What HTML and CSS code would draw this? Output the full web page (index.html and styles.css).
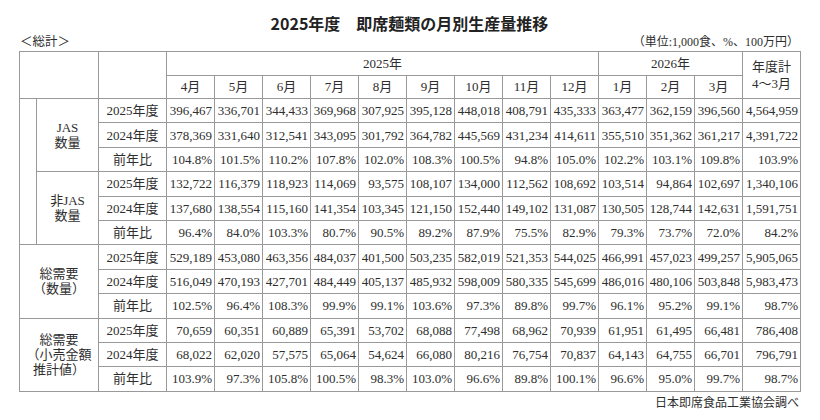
FILE: index.html
```html
<!DOCTYPE html>
<html lang="ja">
<head>
<meta charset="utf-8">
<link rel="stylesheet" href="styles.css">
</head>
<body>
<div class="page">
  <h1 class="title">2025年度　即席麺類の月別生産量推移</h1>
  <div class="meta">
    <span class="sum">＜総計＞</span>
    <span>（単位:1,000食、%、100万円）</span>
  </div>
  <table class="grid">
    <colgroup>
      <col class="c-a"><col class="c-b"><col class="c-lab">
      <col class="c-m"><col class="c-m"><col class="c-m"><col class="c-m"><col class="c-m"><col class="c-m">
      <col class="c-m"><col class="c-m"><col class="c-m"><col class="c-m"><col class="c-m"><col class="c-m">
      <col class="c-t">
    </colgroup>
    <thead>
      <tr class="hr">
        <th colspan="2" rowspan="2"></th>
        <th rowspan="2"></th>
        <th colspan="9">2025年</th>
        <th colspan="3">2026年</th>
        <th rowspan="2" class="tot">年度計<br>4～3月</th>
      </tr>
      <tr class="hr">
        <th>4月</th><th>5月</th><th>6月</th><th>7月</th><th>8月</th><th>9月</th><th>10月</th><th>11月</th><th>12月</th>
        <th>1月</th><th>2月</th><th>3月</th>
      </tr>
    </thead>
    <tbody>
      <tr>
        <td rowspan="6"></td>
        <td rowspan="3" class="grp">JAS<br>数量</td>
        <td class="lab">2025年度</td>
        <td>396,467</td><td>336,701</td><td>344,433</td><td>369,968</td><td>307,925</td><td>395,128</td><td>448,018</td><td>408,791</td><td>435,333</td><td>363,477</td><td>362,159</td><td>396,560</td><td>4,564,959</td>
      </tr>
      <tr>
        <td class="lab">2024年度</td>
        <td>378,369</td><td>331,640</td><td>312,541</td><td>343,095</td><td>301,792</td><td>364,782</td><td>445,569</td><td>431,234</td><td>414,611</td><td>355,510</td><td>351,362</td><td>361,217</td><td>4,391,722</td>
      </tr>
      <tr>
        <td class="lab">前年比</td>
        <td>104.8%</td><td>101.5%</td><td>110.2%</td><td>107.8%</td><td>102.0%</td><td>108.3%</td><td>100.5%</td><td>94.8%</td><td>105.0%</td><td>102.2%</td><td>103.1%</td><td>109.8%</td><td>103.9%</td>
      </tr>
      <tr>
        <td rowspan="3" class="grp">非JAS<br>数量</td>
        <td class="lab">2025年度</td>
        <td>132,722</td><td>116,379</td><td>118,923</td><td>114,069</td><td>93,575</td><td>108,107</td><td>134,000</td><td>112,562</td><td>108,692</td><td>103,514</td><td>94,864</td><td>102,697</td><td>1,340,106</td>
      </tr>
      <tr>
        <td class="lab">2024年度</td>
        <td>137,680</td><td>138,554</td><td>115,160</td><td>141,354</td><td>103,345</td><td>121,150</td><td>152,440</td><td>149,102</td><td>131,087</td><td>130,505</td><td>128,744</td><td>142,631</td><td>1,591,751</td>
      </tr>
      <tr>
        <td class="lab">前年比</td>
        <td>96.4%</td><td>84.0%</td><td>103.3%</td><td>80.7%</td><td>90.5%</td><td>89.2%</td><td>87.9%</td><td>75.5%</td><td>82.9%</td><td>79.3%</td><td>73.7%</td><td>72.0%</td><td>84.2%</td>
      </tr>
      <tr>
        <td rowspan="3" colspan="2" class="grp">総需要<br>（数量）</td>
        <td class="lab">2025年度</td>
        <td>529,189</td><td>453,080</td><td>463,356</td><td>484,037</td><td>401,500</td><td>503,235</td><td>582,019</td><td>521,353</td><td>544,025</td><td>466,991</td><td>457,023</td><td>499,257</td><td>5,905,065</td>
      </tr>
      <tr>
        <td class="lab">2024年度</td>
        <td>516,049</td><td>470,193</td><td>427,701</td><td>484,449</td><td>405,137</td><td>485,932</td><td>598,009</td><td>580,335</td><td>545,699</td><td>486,016</td><td>480,106</td><td>503,848</td><td>5,983,473</td>
      </tr>
      <tr>
        <td class="lab">前年比</td>
        <td>102.5%</td><td>96.4%</td><td>108.3%</td><td>99.9%</td><td>99.1%</td><td>103.6%</td><td>97.3%</td><td>89.8%</td><td>99.7%</td><td>96.1%</td><td>95.2%</td><td>99.1%</td><td>98.7%</td>
      </tr>
      <tr>
        <td rowspan="3" colspan="2" class="grp">総需要<br>（小売金額<br>推計値）</td>
        <td class="lab">2025年度</td>
        <td>70,659</td><td>60,351</td><td>60,889</td><td>65,391</td><td>53,702</td><td>68,088</td><td>77,498</td><td>68,962</td><td>70,939</td><td>61,951</td><td>61,495</td><td>66,481</td><td>786,408</td>
      </tr>
      <tr>
        <td class="lab">2024年度</td>
        <td>68,022</td><td>62,020</td><td>57,575</td><td>65,064</td><td>54,624</td><td>66,080</td><td>80,216</td><td>76,754</td><td>70,837</td><td>64,143</td><td>64,755</td><td>66,701</td><td>796,791</td>
      </tr>
      <tr>
        <td class="lab">前年比</td>
        <td>103.9%</td><td>97.3%</td><td>105.8%</td><td>100.5%</td><td>98.3%</td><td>103.0%</td><td>96.6%</td><td>89.8%</td><td>100.1%</td><td>96.6%</td><td>95.0%</td><td>99.7%</td><td>98.7%</td>
      </tr>
    </tbody>
  </table>
  <div class="source">日本即席食品工業協会調べ</div>
</div>
</body>
</html>
```

FILE: styles.css
```css
html, body {
  margin: 0;
  padding: 0;
  background: #ffffff;
}

.page {
  width: 820px;
  height: 420px;
  padding: 0 20px 0 19px;
  box-sizing: border-box;
  color: #2e2e2e;
  font-family: "Liberation Serif", "Noto Sans CJK JP", serif;
}

.title {
  margin: 0;
  padding-top: 13px;
  height: 21px;
  line-height: 21px;
  text-align: center;
  font-family: "Noto Sans CJK JP", "Noto Sans", sans-serif;
  font-size: 16px;
  font-weight: 700;
  color: #222;
}

.meta {
  display: flex;
  justify-content: space-between;
  align-items: center;
  height: 17px;
  font-size: 12px;
  line-height: 17px;
  padding-right: 1px;
}

.meta .sum {
  font-size: 12.5px;
  margin-left: 1px;
}

.grid {
  width: 781px;
  border-collapse: collapse;
  table-layout: fixed;
  font-size: 13px;
  border: 1px solid #aaa;
}

.c-a { width: 17px; }
.c-b { width: 62px; }
.c-lab { width: 68px; }
.c-m { width: 48px; }
.c-t { width: 58px; }

.grid th,
.grid td {
  border: 1px solid #999;
  padding: 0 2px 0 0;
  white-space: nowrap;
  line-height: 15px;
}

.grid th {
  font-weight: 400;
  text-align: center;
  padding: 0;
}

.hr { height: 23.5px; }

.grid tbody tr { height: 24.4px; }

.grid td { text-align: right; }

.grid td.lab {
  text-align: center;
  padding: 0;
}

.grid td.grp {
  text-align: center;
  padding: 0;
  line-height: 15px;
}

.grid th.tot {
  line-height: 17px;
}

.source {
  margin-top: 3px;
  text-align: right;
  font-size: 12px;
  line-height: 16px;
  padding-right: 1px;
}
```
